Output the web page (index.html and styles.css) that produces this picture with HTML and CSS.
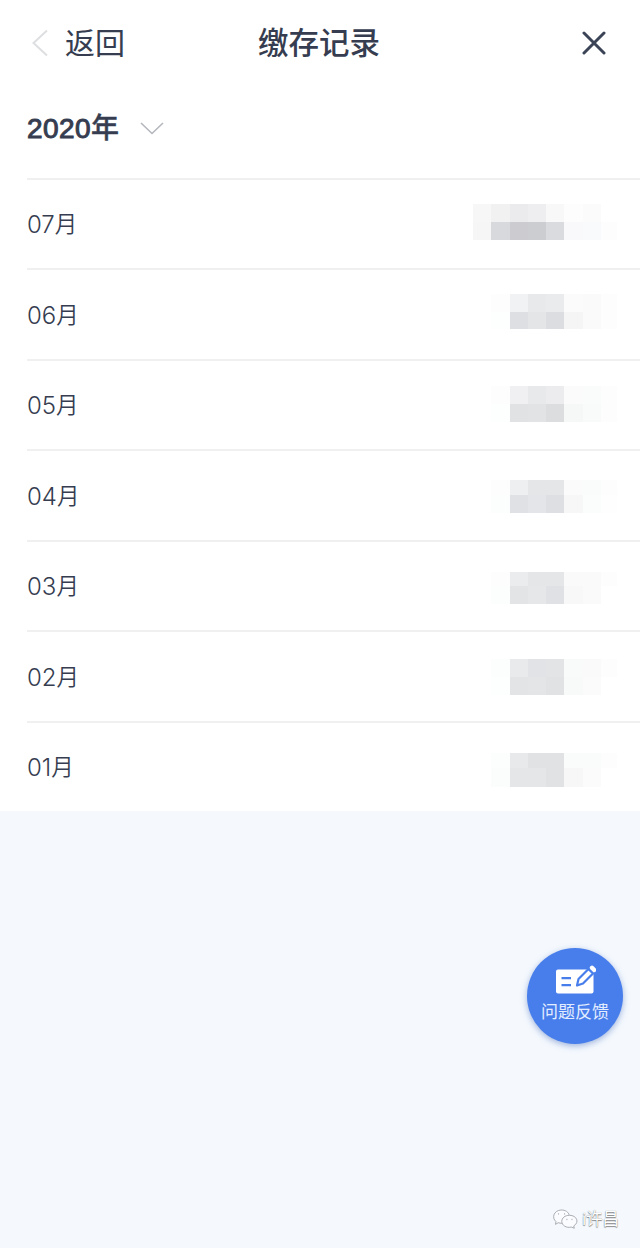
FILE: index.html
```
<!DOCTYPE html>
<html lang="zh-CN">
<head>
  <meta charset="UTF-8">
  <meta name="viewport" content="width=device-width, initial-scale=1.0">
  <title>缴存记录</title>
  <link rel="stylesheet" href="styles.css">
</head>
<body>
  <div class="panel">
    <header class="header">
      <div class="back">
        <svg class="back-icon" width="16" height="28" viewBox="0 0 16 28"><path d="M15 1.5L1.5 14L15 26.5"/></svg>
        <span class="back-text">返回</span>
      </div>
      <h1 class="title">缴存记录</h1>
      <svg class="close-icon" width="24" height="24" viewBox="0 0 24 24"><path d="M2 2L22 22M22 2L2 22"/></svg>
    </header>
    <div class="year">
      <span class="year-text">2020<span class="year-unit">年</span></span>
      <svg class="year-icon" width="24" height="13" viewBox="0 0 24 13"><path d="M1 1L12 11.5L23 1"/></svg>
    </div>
    <ul class="list" id="list"></ul>
  </div>

  <button class="feedback">
    <svg class="feedback-icon" width="42" height="30" viewBox="0 0 42 30">
      <rect x="2" y="4.5" width="37.5" height="24" rx="2" fill="#fff"/>
      <path d="M7.5 13.2h9.5M7.5 20.2h9.5" stroke="#477eeb" stroke-width="2.2"/>
      <path d="M23 20.5L24.5 14L34.5 4L39 8.5L29 18.5Z" fill="#fff" stroke="#477eeb" stroke-width="2.2" stroke-linejoin="round"/>
      <path d="M36.8 2.8L40.2 6.2" stroke="#477eeb" stroke-width="6"/>
      <path d="M38 2.8L40.2 5" stroke="#fff" stroke-width="4.4" stroke-linecap="round"/>
    </svg>
    <span>问题反馈</span>
  </button>

  <footer class="footer">
    <svg class="wechat" width="27" height="22" viewBox="0 0 27 22">
      <path d="M10 15.5C8.5 15.8 7 15.5 5.6 15L2.7 16.8L3.2 13.7C-1.5 10 .5 2 8.5 1.3C13.5 1 17 3.8 17.5 7"/>
      <path d="M17.8 7C12.8 7 9.5 10 9.5 13.5C9.5 18 14.5 21 19.8 19.7L23 21L22.4 18.5C29 14.5 25.5 7 17.8 7Z"/>
      <path d="M6 4.8v1.4M12.5 4.8v1.4M15 10.8v1.4M20.5 10.8v1.4"/>
    </svg>
    <span>i许昌</span>
  </footer>

  <script src="script.js"></script>
</body>
</html>
```
FILE: styles.css
```
* {
  box-sizing: border-box;
}
body {
  margin: 0;
  height: 1248px;
  background-color: #f5f9fe;
  color: #363d50;
  font-family: "Liberation Sans", "Noto Sans CJK SC", sans-serif;
  position: relative;
  overflow: hidden;
}
.panel {
  background-color: #fff;
  height: 811px;
}
.header {
  display: grid;
  grid-template-columns: 1fr auto 1fr;
  align-items: center;
  height: 85px;
  padding: 0 34px 0 32px;
}
.back {
  display: flex;
  align-items: center;
  gap: 17px;
  font-size: 30px;
}
.back-text,
.title {
  padding-bottom: 3px;
}
.back-icon,
.close-icon,
.year-icon,
.wechat {
  fill: none;
  stroke: #dedfe1;
  stroke-width: 2;
}
.title {
  margin: 0;
  font-size: 30.5px;
  font-weight: 500;
}
.close-icon {
  justify-self: end;
  stroke: #3b4457;
  stroke-width: 3;
  stroke-linecap: round;
}
.year {
  display: flex;
  align-items: center;
  gap: 21px;
  height: 92.5px;
  padding: 0 0 5px 27px;
}
.year-text {
  font-size: 28px;
  font-weight: 400;
  letter-spacing: 0.4px;
  line-height: 40px;
  -webkit-text-stroke: 1px #363d50;
}
.year-unit {
  font-weight: 500;
  -webkit-text-stroke-width: 0.4px;
}
.year-icon {
  stroke: #b4b7bd;
  stroke-width: 1.6;
}
.list {
  list-style: none;
  margin: 0;
  padding: 0 0 0 27px;
}
.row {
  display: flex;
  justify-content: space-between;
  align-items: center;
  height: 90.5px;
  border-top: 2px solid #f0f0f1;
}
.month {
  padding-bottom: 2px;
  font-family: Inter, "Noto Sans CJK SC", sans-serif;
  font-size: 24px;
  font-weight: 350;
}
.month-unit {
  font-size: 22.5px;
  vertical-align: 1px;
}
.amount {
  display: block;
  width: 180px;
  height: 88px;
}

.feedback {
  position: absolute;
  left: 527px;
  top: 948px;
  width: 96px;
  height: 96px;
  padding: 0 0 5px;
  border: none;
  border-radius: 50%;
  background-color: #477eeb;
  box-shadow: 0 2px 6px rgba(71, 110, 190, 0.5);
  color: #e4edff;
  font-family: "Noto Sans CJK SC", sans-serif;
  font-size: 17px;
  line-height: 24px;
  display: flex;
  flex-direction: column;
  align-items: center;
  justify-content: center;
  gap: 4px;
}
.footer {
  position: absolute;
  right: 21px;
  bottom: 17px;
  display: flex;
  align-items: center;
  gap: 4px;
  color: #fff;
  font-size: 16.5px;
  line-height: 24px;
  text-shadow: 0 0 1px #777, 0 1px 1px #888;
}
.wechat {
  width: 25px;
  fill: #fbfcff;
  stroke: #a3a6ac;
  stroke-width: 1;
}
```
FILE: script.js
```
// masked amounts: top and bottom line of blocks, y / split / end inside the row
const columns = [13, 31, 49.5, 68, 86, 104, 122.5, 141, 157];
const months = [
  { name: '07', y: [24, 42, 60], top: ['#f7f7f7', '#f1f1f2', '#ebebed', '#eeeef0', '#f8f8f8', '#fdfdfd', '#fbfbfc', '#fff'], bottom: ['#f6f6f6', '#d8d9dd', '#ccccd0', '#cccdd1', '#dadbdf', '#f9f9fc', '#f9fafc', '#fdfdfd'] },
  { name: '06', y: [24, 42, 58.5], top: ['#fff', '#fdfdfd', '#f1f2f4', '#e8e9eb', '#eaebed', '#fbfbfb', '#fafafa', '#fdfdfd'], bottom: ['#fff', '#fdfefe', '#dedfe2', '#e4e5e7', '#dcdde0', '#f5f5f5', '#fafafa', '#fdfdfd'] },
  { name: '05', y: [25, 43, 61], top: ['#fff', '#fdfdfd', '#f0f0f2', '#e8e9eb', '#ececee', '#fbfbfb', '#fafbfb', '#fdfdfd'], bottom: ['#fff', '#fdfefe', '#e1e2e4', '#e2e3e5', '#dcddde', '#f6f7f7', '#f9fafa', '#fdfdfd'] },
  { name: '04', y: [29, 43.5, 62], top: ['#fff', '#fdfdfd', '#eeeff1', '#e5e6e8', '#e5e6e8', '#fbfbfb', '#fafbfb', '#fdfdfd'], bottom: ['#fff', '#fcfdfd', '#e0e1e5', '#e4e5e8', '#dedfe3', '#f7f7f7', '#fbfcfc', '#fefefe'] },
  { name: '03', y: [29.5, 44, 62], top: ['#fff', '#fdfdfd', '#ebecee', '#e5e6e8', '#e5e6e8', '#fafafa', '#fafafa', '#fdfdfd'], bottom: ['#fff', '#fcfdfd', '#e3e4e6', '#e6e7e9', '#e0e1e4', '#f8f8f8', '#fafafa', '#fff'] },
  { name: '02', y: [26.5, 44.5, 62.5], top: ['#fff', '#fcfdfd', '#e9eaec', '#e2e3e6', '#e3e4e6', '#f9fafa', '#fafafa', '#fdfdfd'], bottom: ['#fff', '#fdfefe', '#e3e4e6', '#e4e5e7', '#e1e2e4', '#f8f9f9', '#fbfbfb', '#fff'] },
  { name: '01', y: [30, 45, 63.5], top: ['#fff', '#fcfdfd', '#e8e9ea', '#e1e2e4', '#e1e2e4', '#fafbfb', '#fafbfb', '#fdfdfd'], bottom: ['#fff', '#fbfdfd', '#e5e6e8', '#e5e6e8', '#e1e2e4', '#f7f7f7', '#fbfbfb', '#fff'] }
];

function blocks(colors, y, end) {
  return colors.map((color, i) =>
    `<rect x="${columns[i]}" y="${y}" width="${columns[i + 1] - columns[i]}" height="${end - y}" fill="${color}"/>`
  ).join('');
}

document.getElementById('list').innerHTML = months.map(month => `
  <li class="row">
    <span class="month">${month.name}<span class="month-unit">月</span></span>
    <svg class="amount" viewBox="0 0 180 88" shape-rendering="crispEdges">
      ${blocks(month.top, month.y[0], month.y[1])}
      ${blocks(month.bottom, month.y[1], month.y[2])}
    </svg>
  </li>`).join('');
```
